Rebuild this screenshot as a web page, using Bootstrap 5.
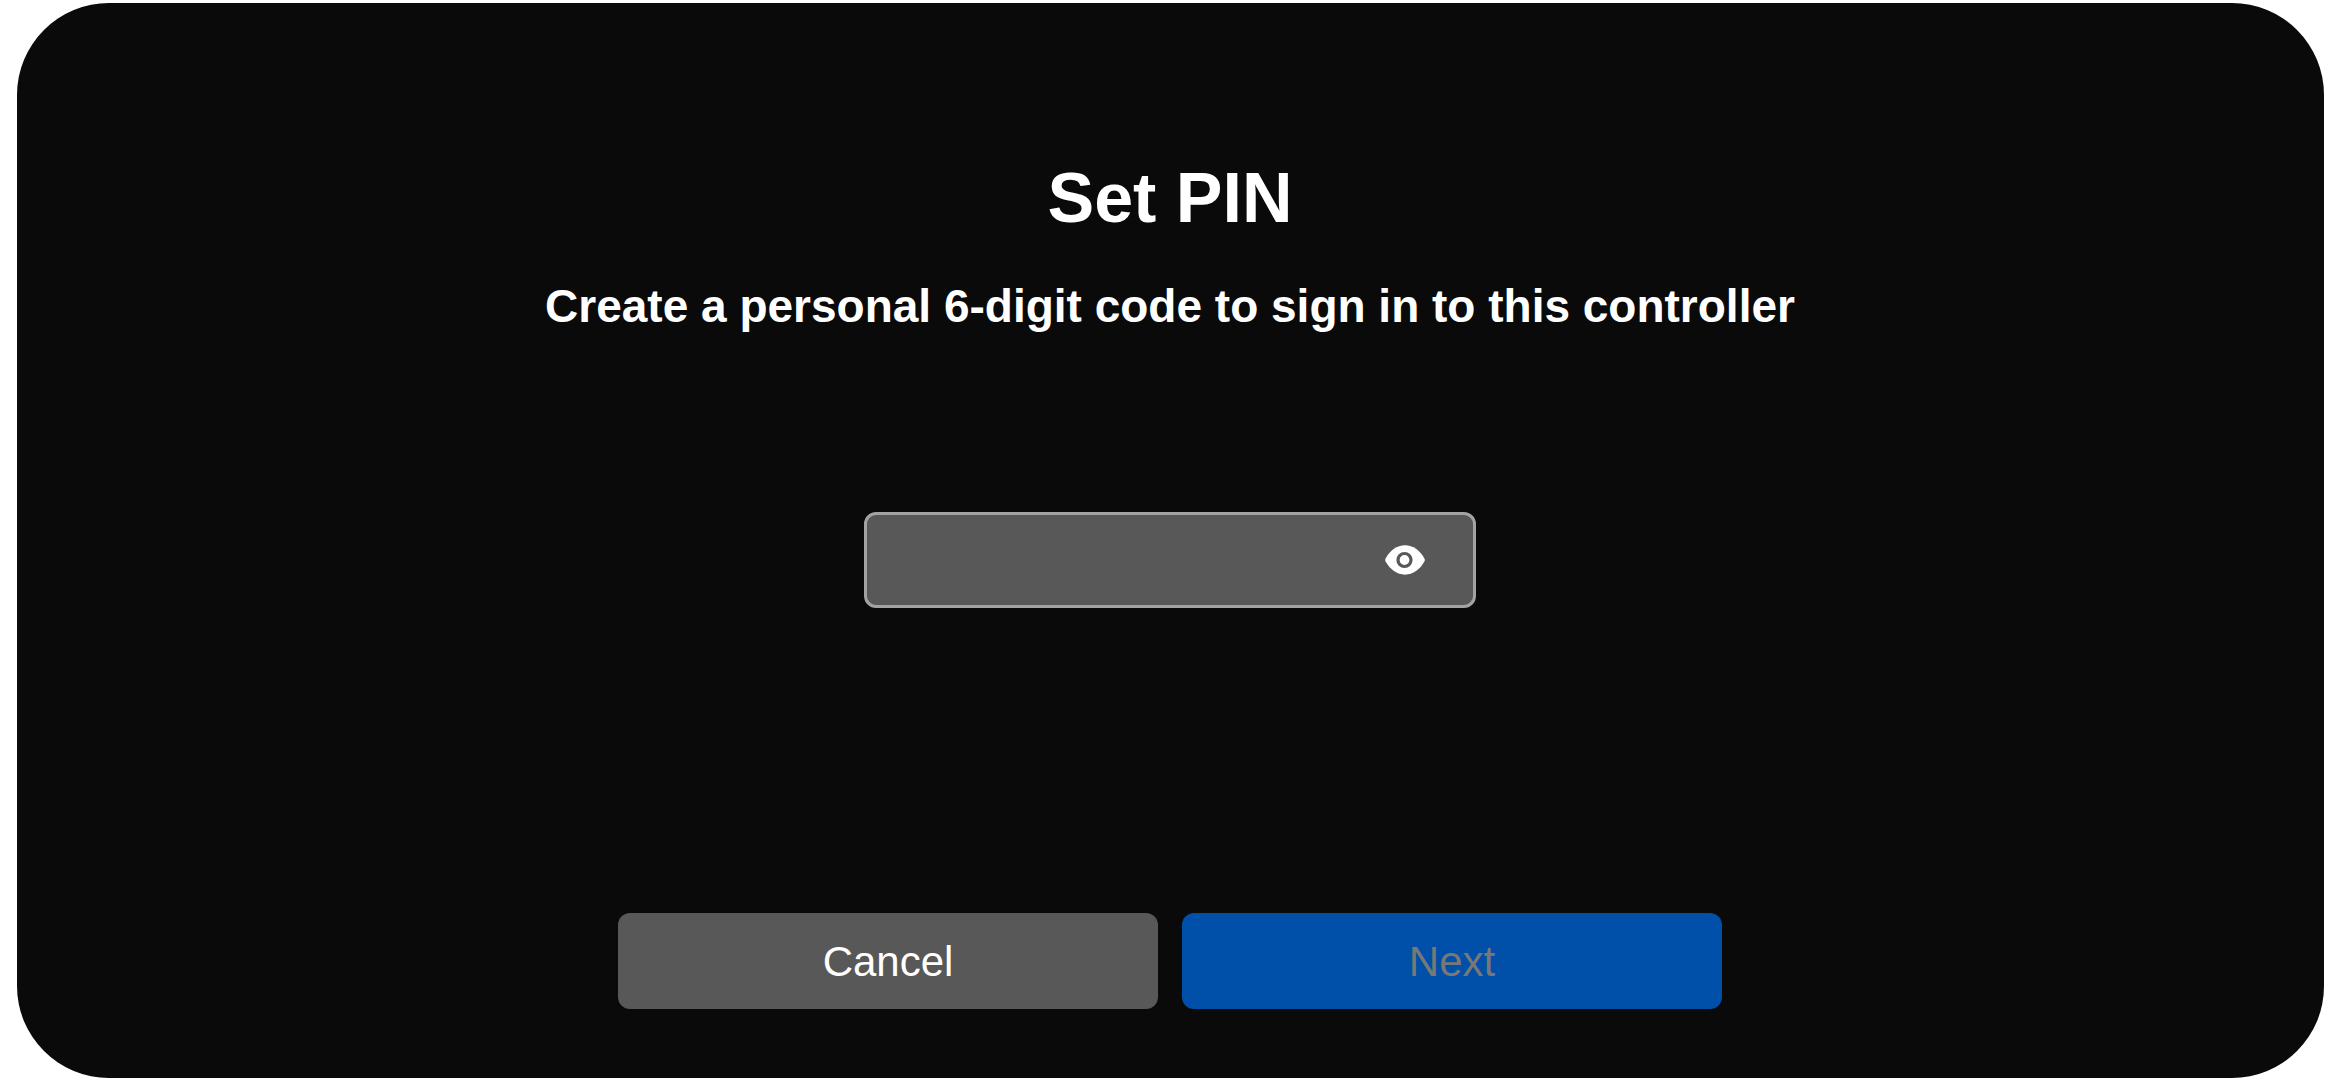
<!DOCTYPE html>
<html lang="en">
<head>
<meta charset="utf-8">
<title>Set PIN</title>
<link href="https://cdn.jsdelivr.net/npm/bootstrap@5.3.0/dist/css/bootstrap.min.css" rel="stylesheet">
<style>
html, body { height: 100%; background: #fff; }
body { font-family: "Liberation Sans", Arial, sans-serif; overflow: hidden; }
.frame { height: 1080px; padding: 3px 16px 2px 17px; }
.panel { height: 100%; background: #0a0a0a; border-radius: 92px; padding-right: 1px; }
.pin-title { font-size: 70px; line-height: 80px; font-weight: 700; color: #fff; margin: 155px 0 0; }
.pin-sub { font-size: 46px; line-height: 56px; font-weight: 700; color: #fff; margin: 40px 0 0; }
.pin-box { width: 612px; height: 96px; margin-top: 178px; }
.pin-input.form-control { height: 100%; background: #585858; border: 3px solid #a3a3a3; border-radius: 12px; color: #fff; font-size: 42px; box-shadow: none; padding-right: 110px; }
.pin-eye { right: 51px; top: 33px; width: 40px; height: 30px; padding: 0; border: 0; background: none; display: flex; }
.pin-actions { gap: 24px; margin-top: 305px; }
.pin-btn.btn { width: 540px; height: 96px; border: 0; border-radius: 12px; font-size: 42px; line-height: 1; padding: 2px 0 0; }
.pin-cancel.btn { background: #585858; color: #fff; }
.pin-next.btn { background: #004fa8; color: #787878; opacity: 1; }
</style>
</head>
<body>
<div class="frame">
  <main class="panel d-flex flex-column align-items-center">
    <h1 class="pin-title text-center">Set PIN</h1>
    <p class="pin-sub text-center">Create a personal 6-digit code to sign in to this controller</p>
    <div class="pin-box position-relative">
      <input class="pin-input form-control" type="password" aria-label="PIN">
      <button class="pin-eye position-absolute" type="button" aria-label="Show PIN">
        <svg width="40" height="30" viewBox="0 0 40 30" xmlns="http://www.w3.org/2000/svg">
          <path fill="#fff" d="M0.6 13.4C5 5.5 12 0.3 20 0.3S35 5.5 39.4 13.4Q40.2 15 39.4 16.6C35 24.5 28 29.7 20 29.7S5 24.5 0.6 16.6Q-0.2 15 0.6 13.4Z"/>
          <circle cx="19.5" cy="15" r="6.5" fill="none" stroke="#585858" stroke-width="3.2"/>
        </svg>
      </button>
    </div>
    <div class="pin-actions d-flex">
      <button class="pin-btn pin-cancel btn" type="button">Cancel</button>
      <button class="pin-btn pin-next btn" type="button" disabled>Next</button>
    </div>
  </main>
</div>
<script src="https://cdn.jsdelivr.net/npm/bootstrap@5.3.0/dist/js/bootstrap.bundle.min.js"></script>
</body>
</html>
